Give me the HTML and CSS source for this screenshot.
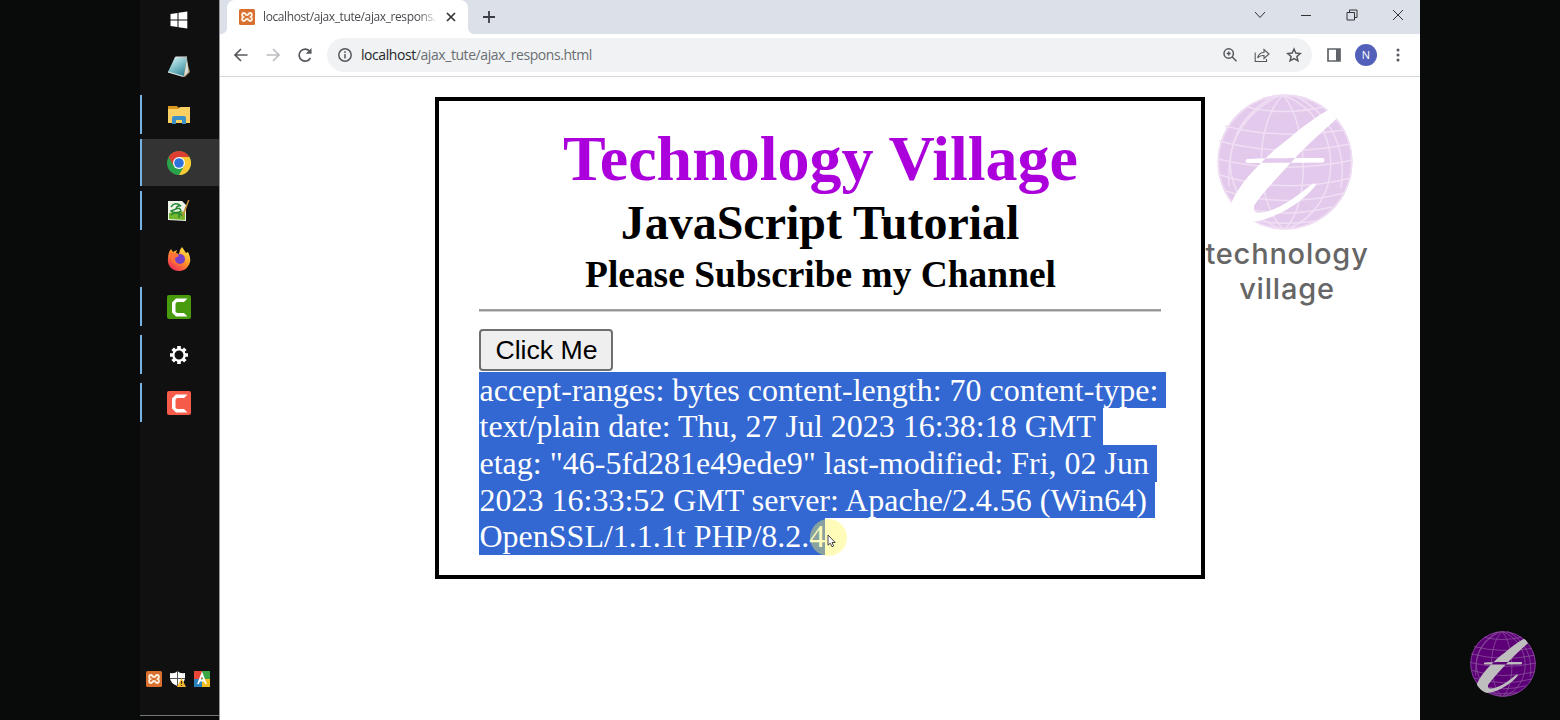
FILE: index.html
```
<!DOCTYPE html>
<html lang="en">
<head>
<meta charset="utf-8">
<title>localhost/ajax_tute/ajax_respons.html</title>
<link rel="stylesheet" href="styles.css">
</head>
<body>
<svg class="defs" width="0" height="0">
  <defs>
    <symbol id="globe" viewBox="0 0 136 136">
      <circle class="sphere" cx="68" cy="68" r="67.5"/>
      <g class="grid">
        <path d="M66 1C38 28 36 106 66 135M66 1C90 28 95 108 68 135M63 1C-5 35-2 108 64 135M66 1C128 24 130 112 70 135M57 2C22 22 10 48 12 92M77 1C114 20 130 55 124 94"/>
        <path d="M30 13Q65 22 106 13M8 32Q62 46 127 36M2 47Q66 64 133 50M1 65Q66 81 136 66M3 81Q66 101 134 84M9 97Q66 115 127 99M24 113Q66 125 115 113M37 126Q66 132 98 127"/>
        <circle cx="68" cy="68" r="66.5"/>
      </g>
      <path class="letter" d="M111 16C97 24 85 33 72.500 44C63 51 56 57 49 64C40 73 33 80 26 89C21 96 16 104 14 110Q20 122 35 128C60 125 87 107 99 91Q98 88 94 91C77 105 58 118 43 118.500C37 119 36 116 37.500 111C48 96 60 84 69 74C84 57 100 42 119.500 25Q116 19 111 16ZM30 65C50 64 85 64 106 64Q109 66 106 68.500L30 69Q27 67 30 65Z"/>
    </symbol>
    <symbol id="xampp" viewBox="0 0 16 16">
      <rect width="16" height="16" rx="1.500" fill="#d96f2e"/>
      <path d="M4.800 4C2.700 4 2.500 7 4.300 8C2.500 9 2.700 12 4.800 12C6.600 12 6.400 9.900 8 9.900S9.400 12 11.200 12C13.300 12 13.500 9 11.700 8C13.500 7 13.300 4 11.200 4C9.400 4 9.600 6.100 8 6.100S6.600 4 4.800 4Z" fill="none" stroke="#fff0df" stroke-width="1.900"/>
    </symbol>
    <symbol id="camtasia" viewBox="0 0 24 24">
      <rect width="24" height="24" rx="2" fill="currentColor"/>
      <path d="M20.500 3.500H9L5 7.500V17.500L9 21.500H20.500L17 18H10L8.500 16.500V8.500L10 7H17Z" fill="#fff"/>
    </symbol>
  </defs>
</svg>
<div class="screen">
  <aside class="taskbar">
    <div class="task"><svg width="18" height="18" viewBox="0 0 18 18"><path fill="#fff" d="M.5 3L7.500 2V8.500H.5ZM8.500 1.800L17.300.5V8.500H8.500ZM.5 9.500H7.500V16L.5 15ZM8.500 9.500H17.300V17.500L8.500 16.200Z"/></svg></div>
    <div class="task"><svg width="24" height="24" viewBox="0 0 24 24"><defs><linearGradient id="np" x2=".6" y2="1"><stop stop-color="#e8f8fa"/><stop offset=".5" stop-color="#8cc6d0"/><stop offset="1" stop-color="#398c9c"/></linearGradient></defs><path d="M19 3L23 17L18 22L15 21Z" fill="#a28a62"/><path d="M8 2L20 3L16.500 21.500L1 17Z" fill="url(#np)"/><path d="M20 3L21.500 17L17 21.500Z" fill="#d5ded9"/><path d="M8.500 2.200H20M1 17L16.500 21.500" stroke="#e8efec" stroke-width="1.200"/></svg></div>
    <div class="task open"><svg width="24" height="24" viewBox="0 0 24 24"><path d="M1 3H10L12 5V8H1Z" fill="#d99620"/><path d="M1 6H11L13 4H23V20H1Z" fill="#fbd063"/><path d="M5 21V15Q5 13 7 13H17Q19 13 19 15V21H15V17H9V21Z" fill="#3b91c7"/></svg></div>
    <div class="task open active"><svg width="26" height="26" viewBox="0 0 26 26"><circle cx="13" cy="13" r="12" fill="#2aa14b"/><path d="M2.600 7A12 12 0 0 1 23.400 7H13L7.800 16Z" fill="#dc3e32"/><path d="M23.400 7A12 12 0 0 1 13 25L18.200 16L13 7Z" fill="#fbc934"/><circle cx="13" cy="13" r="6" fill="#fff"/><circle cx="13" cy="13" r="4.800" fill="#2d72db"/></svg></div>
    <div class="task open"><svg width="26" height="26" viewBox="0 0 26 26"><path d="M2 3H16L20 7V23L2 22Z" fill="#eef4e8"/><path d="M3 15Q11 12 19 14V22L3 21Z" fill="#73b72d"/><path d="M5 9Q9 3 15 8Q11 7 10 11Q14 9 15 13Q10 17 5 13L10 11M5 17Q10 12 17 18M13 15V20" fill="none" stroke="#278735" stroke-width="1.400"/><path d="M23.500 2L18 17L16 20L16.500 16L22 2Z" fill="#c68b35"/></svg></div>
    <div class="task"><svg width="26" height="26" viewBox="0 0 26 26"><defs><linearGradient id="ff" x1=".9" x2=".2" y2="1"><stop stop-color="#fff44b"/><stop offset=".5" stop-color="#ff9228"/><stop offset="1" stop-color="#ef245b"/></linearGradient></defs><path d="M2 12Q2 6 5 3L7 6L11 4L10 7L13 8Q13 4 16 1L20 7L22 6Q25 12 24 16C22 23 17 25 13 25C6 25 1 20 2 12Z" fill="url(#ff)"/><circle cx="14" cy="13" r="5" fill="#7540c6"/><path d="M4 7Q9 6 13 10L9 12Q8 17 14 19Q6 19 5 12Z" fill="#ff7139"/></svg></div>
    <div class="task open"><svg class="green" width="24" height="24"><use href="#camtasia"/></svg></div>
    <div class="task open"><svg width="20" height="20" viewBox="-10 -10 20 20"><g stroke="#fff" stroke-width="3.600"><path d="M0-9V-5M0 9V5M-9 0H-5M9 0H5M-6.300-6.300L-4-4M6.300 6.300L4 4M-6.300 6.300L-4 4M6.300-6.300L4-4"/></g><circle r="5.600" fill="none" stroke="#fff" stroke-width="2.300"/></svg></div>
    <div class="task open"><svg class="red" width="24" height="24"><use href="#camtasia"/></svg></div>
    <div class="tray">
      <svg width="16" height="16"><use href="#xampp"/></svg>
      <svg width="16" height="16" viewBox="0 0 16 16"><path d="M0 2Q5 3 7.500 0Q10 3 15 2V7Q15 12 7.500 15Q0 12 0 7Z" fill="#fff"/><path d="M7.500 0V16M0 7.500H15" stroke="#555" stroke-width="1"/><path d="M11.500 7L16 16H7Z" fill="#f4b82c"/><path d="M11.500 10V13M11.500 14V15" stroke="#453511" stroke-width="1.200"/></svg>
      <svg width="16" height="16" viewBox="0 0 16 16"><path fill="#e64736" d="M0 0H8V8H0Z"/><path fill="#3ba546" d="M8 0H16V8H8Z"/><path fill="#2882bd" d="M0 8H8V16H0Z"/><path fill="#f3bd20" d="M8 8H16V16H8Z"/><path d="M4 13L8 3L12 13M5.500 9.500H10.500" fill="none" stroke="#fff" stroke-width="1.800"/></svg>
    </div>
  </aside>
  <main class="browser">
    <header class="tabs">
      <div class="tab">
        <svg width="16" height="16"><use href="#xampp"/></svg>
        <span class="tab-title">localhost/ajax_tute/ajax_respons.</span>
        <svg class="tab-close" width="10" height="10" viewBox="0 0 10 10"><path d="M1 1L9 9M9 1L1 9" stroke="#333" stroke-width="1.700"/></svg>
      </div>
      <svg class="plus" width="14" height="14" viewBox="0 0 14 14"><path d="M7 1V13M1 7H13" stroke="#3b3d42" stroke-width="1.800"/></svg>
      <div class="window-controls">
        <svg width="12" height="12" viewBox="0 0 12 12"><path d="M1 3L6 8.500L11 3"/></svg>
        <svg width="12" height="12" viewBox="0 0 12 12"><path d="M1 6.500H11"/></svg>
        <svg width="12" height="12" viewBox="0 0 12 12"><path d="M1 3.500H8.500V11H1ZM3.500 3.500V1H11V8.500H8.500"/></svg>
        <svg width="12" height="12" viewBox="0 0 12 12"><path d="M1 1L11 11M11 1L1 11"/></svg>
      </div>
    </header>
    <div class="toolbar">
      <svg class="nav" width="16" height="16" viewBox="0 0 16 16"><path d="M14.500 8H2M8 2L2 8L8 14"/></svg>
      <svg class="nav faded" width="16" height="16" viewBox="0 0 16 16"><path d="M1.500 8H14M8 2L14 8L8 14"/></svg>
      <svg class="nav" width="16" height="16" viewBox="0 0 16 16"><path d="M13.400 11A6 6 0 1 1 12.500 4L14 5.800"/><path d="M14.500 1V6.800H8.700Z" class="solid"/></svg>
      <div class="address">
        <svg width="16" height="16" viewBox="0 0 16 16"><circle cx="8" cy="8" r="6.200"/><path d="M8 7V11.500M8 4.300V5.900"/></svg>
        <div class="url"><b>localhost</b>/ajax_tute/ajax_respons.html</div>
        <div class="address-tools">
          <svg width="16" height="16" viewBox="0 0 16 16"><circle cx="6.700" cy="6.500" r="4.700"/><path d="M10.300 10L14.500 14.200M4.700 6.500H8.700M6.700 4.500V8.500"/></svg>
          <svg class="thin" width="16" height="16" viewBox="0 0 16 16"><path d="M1.200 5.500V14.500H12.500V12M3.500 11Q5 5.500 10 5.500V2.500L15 7L10 11.500V8.500Q6 8 3.500 11Z"/></svg>
          <svg width="16" height="16" viewBox="0 0 16 16"><path d="M8 2L9.800 6.100L14.200 6.500L10.900 9.400L11.900 13.800L8 11.500L4.100 13.800L5.100 9.400L1.800 6.500L6.200 6.100Z"/></svg>
        </div>
      </div>
      <svg class="panel" width="14" height="14" viewBox="0 0 14 14"><path fill="none" stroke="#5f6368" stroke-width="1.700" d="M1 1H13V13H1Z"/><path fill="#5f6368" d="M9 1H13V13H9Z"/></svg>
      <div class="avatar">N</div>
      <svg class="dots" width="4" height="14" viewBox="0 0 4 14"><circle cx="2" cy="2" r="1.500"/><circle cx="2" cy="7" r="1.500"/><circle cx="2" cy="12" r="1.500"/></svg>
    </div>
    <section class="page">
      <div class="card">
        <h1>Technology Village</h1>
        <h2>JavaScript Tutorial</h2>
        <h3>Please Subscribe my Channel</h3>
        <hr>
        <button>Click Me</button>
        <div class="response"><span>accept-ranges: bytes content-length: 70 content-type: </span><span>text/plain date: Thu, 27 Jul 2023 16:38:18 GMT </span><span>etag: "46-5fd281e49ede9" last-modified: Fri, 02 Jun </span><span>2023 16:33:52 GMT server: Apache/2.4.56 (Win64) </span><span>OpenSSL/1.1.1t PHP/8.2.4</span></div>
      </div>
      <div class="brand">
        <svg class="globe pale" width="136" height="136"><use href="#globe"/></svg>
        <div class="brand-name">technology</div><div class="brand-name second">village</div>
      </div>
    </section>
  </main>
  <div class="pointer"><svg width="9" height="14" viewBox="0 0 9 14"><path d="M1 1V11.200L3.300 9.200L5 12.800L6.700 12L5 8.500H8.200Z" fill="#fff" stroke="#333" stroke-width=".9"/></svg></div>
  <svg class="globe badge" width="66" height="66"><use href="#globe"/></svg>
</div>
</body>
</html>
```
FILE: styles.css
```
* { box-sizing: border-box; }
body { margin: 0; background: #080b0a; overflow: hidden; }
svg { display: block; flex: none; }
.defs { position: absolute; }
.screen { position: relative; display: flex; width: 1560px; height: 720px; padding: 0 140px; background: #080b0a; }

.taskbar { display: flex; flex-direction: column; width: 79px; height: 716px; background: #101010; border-bottom: 1px solid #777; }
.task { position: relative; display: flex; align-items: center; justify-content: center; height: 48px; padding-right: 1px; flex: none; }
.task:first-child { height: 43px; padding-bottom: 3px; }
.task.active { height: 47px; margin-bottom: 1px; background: #333; }
.task.open::before { content: ""; position: absolute; left: 0; top: 4px; width: 2px; height: 39px; background: #76b5e3; }
.task.active::before { top: 0; height: 47px; }
.green { color: #479b0c; }
.red { color: #f65b49; }
.tray { display: flex; gap: 8px; margin-top: auto; padding: 0 0 28px 6px; }

.browser { display: flex; flex-direction: column; width: 1201px; background: #fff; border-left: 1px solid #999; }
.tabs { display: flex; align-items: center; height: 34px; padding-left: 7px; background: #dce0e9; }
.tab { position: relative; display: flex; align-items: center; width: 241px; height: 34px; padding: 0 11px 0 12px; background: #fff; border-radius: 8px 8px 0 0; }
.tab::before, .tab::after { content: ""; position: absolute; bottom: 0; width: 7px; height: 7px; }
.tab::before { left: -7px; background: radial-gradient(circle at 0 0, #dce0e9 7px, #fff 7.5px); }
.tab::after { right: -7px; background: radial-gradient(circle at 100% 0, #dce0e9 7px, #fff 7.5px); }
.tab-title { width: 176px; margin-left: 8px; white-space: nowrap; font: 12px/18px "Open Sans", sans-serif; letter-spacing: -.4px; color: #484b4f; mask-image: linear-gradient(90deg, #000 88%, transparent); }
.tab-close { margin-left: 7px; }
.plus { margin-left: 14px; }
.window-controls { display: flex; gap: 34px; margin: -5px 16px 0 auto; }
.window-controls svg { fill: none; stroke: #333; stroke-width: 1; }
.toolbar { display: flex; align-items: center; height: 43px; border-bottom: 1px solid #d7d8da; padding-left: 13px; }
.nav { margin-right: 16px; fill: none; stroke: #55585d; stroke-width: 1.7; }
.nav + .nav + .nav { margin-right: 14px; }
.nav .solid { fill: #55585d; stroke: none; }
.faded { stroke: #bbbdc1; }
.address { display: flex; align-items: center; width: 985px; height: 34px; padding: 0 10px; border-radius: 17px; background: #f0f2f4; }
.address svg { fill: none; stroke: #55585d; stroke-width: 1.5; }
.address svg.thin { stroke-width: 1.1; }
.url { margin-left: 8px; font: 14px/20px "Open Sans", sans-serif; letter-spacing: -.43px; color: #6b6e72; }
.url b { font-weight: 400; color: #252629; }
.address-tools { display: flex; gap: 16px; margin-left: auto; }
.panel { margin-left: 15px; }
.avatar { width: 22px; height: 22px; margin-left: 14px; border-radius: 50%; background: #5360ba; color: #fff; font: 11px/22px "Open Sans", sans-serif; text-align: center; }
.dots { margin-left: 19px; fill: #55585d; }

.page { display: flex; align-items: flex-start; padding: 20px 0 0 215px; font-family: "Liberation Serif", serif; }
.card { width: 770px; height: 482px; border: 4px solid #000; padding: 25px 40px 0; color: #000; flex: none; }
h1, h2, h3 { margin: 0; text-align: center; white-space: nowrap; font-weight: 700; }
h1 { padding-left: 1px; font-size: 64px; line-height: 66px; color: #ab00dc; }
h2 { font-size: 48px; line-height: 62px; }
h3 { padding-left: 1px; font-size: 37.44px; line-height: 41px; }
hr { height: 3px; margin: 14px 0 17px; border: 0; background: linear-gradient(#a0a0a0 0 1px, #949494 1px 2px, #d0d0d0 2px); }
button { display: block; width: 134px; height: 42px; padding: 0 0 0 1px; border: 2px solid #6f6f6f; border-radius: 4px; background: #efefef; color: #000; font: 26.67px/36px "Liberation Sans", sans-serif; }
.response { padding-top: .6px; font-size: 32px; line-height: 36.67px; color: #fff; }
.response span { display: block; width: fit-content; height: 36.67px; padding-left: .5px; white-space: pre; background: #3367d1; }

.brand { display: flex; flex-direction: column; align-items: center; width: 164px; margin-top: -3px; }
.globe { --sphere: #e3c9eb; --line: #f0dff4; --letter: #fff; }
.sphere { fill: var(--sphere); }
.grid { fill: none; stroke: var(--line); stroke-width: 1.5; }
.letter { fill: var(--letter); }
.brand .globe { margin-left: -4px; }
.brand-name { margin-top: 6px; font: 500 29px/35px Inter, sans-serif; letter-spacing: .8px; color: #666; white-space: nowrap; }
.brand-name.second { margin-top: 0; }
.badge { position: absolute; left: 1470px; top: 631px; --sphere: #5d0078; --line: #8c589c; --letter: #bebebe; }
.pointer { position: absolute; left: 810px; top: 519px; width: 37px; height: 37px; padding: 15px 0 0 17px; border-radius: 50%; background: rgba(255,247,90,.42); }
```
